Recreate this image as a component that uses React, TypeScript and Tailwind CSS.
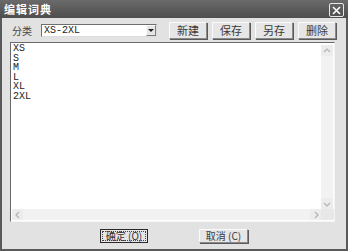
import React from 'react'

const cjk = { fontFamily: '"Noto Sans CJK SC", "Liberation Sans", sans-serif' }

const sizes = ['XS', 'S', 'M', 'L', 'XL', '2XL']

const Btn: React.FC<{ label: string; className?: string }> = ({ label, className = '' }) => (
	<button
		className={`shrink-0 whitespace-nowrap flex items-center justify-center bg-[#e6e6e6] border border-t-[#fafafa] border-l-[#fafafa] border-r-[#8a8a8a] border-b-[#8a8a8a] shadow-[1px_1px_0_#5a5a5a] text-[11px] leading-none text-[#3a3a3a] ${className}`}
		style={cjk}
	>
		{label}
	</button>
)

const Chevron: React.FC<{ dir: 'up' | 'down' | 'left' | 'right' }> = ({ dir }) => {
	const d = {
		up: 'M2 6 L5 3 L8 6',
		down: 'M2 4 L5 7 L8 4',
		left: 'M6 2 L3 5 L6 8',
		right: 'M4 2 L7 5 L4 8',
	}[dir]
	return (
		<svg width="10" height="10" viewBox="0 0 10 10">
			<path d={d} fill="none" stroke="#b4b4b4" strokeWidth="1.2" />
		</svg>
	)
}

export default function App() {
	return (
		<div className="w-[348px] h-[251px] bg-[#5a5a5a] flex flex-col overflow-hidden">
			{/* 标题栏 */}
			<div className="h-[18px] flex items-center justify-between pl-[4px] pr-[4px] bg-gradient-to-b from-[#6a6a6a] to-[#4e4e4e]">
				<span className="text-[11px] font-bold text-white leading-none tracking-[1px]" style={cjk}>
					编辑词典
				</span>
				<div className="w-[15px] h-[14px] border border-[#e8e8e8] rounded-[2px] flex items-center justify-center mt-[2px]">
					<svg width="9" height="9" viewBox="0 0 9 9">
						<path d="M1 1 L8 8 M8 1 L1 8" stroke="#ffffff" strokeWidth="1.6" />
					</svg>
				</div>
			</div>

			{/* 主体 */}
			<div className="flex-1 mx-[2px] mb-[2px] bg-[#e2e2e2] pl-[8px] pr-[11px] pt-[4px] pb-[6px] flex flex-col">
				<div className="h-[17px] flex items-center">
					<span className="shrink-0 whitespace-nowrap w-[19px] ml-[2px] text-[10px] leading-none text-[#444]" style={cjk}>
						分类
					</span>
					<div className="shrink-0 ml-[10px] w-[116px] h-[13px] bg-white border border-t-[#6e6e6e] border-l-[#6e6e6e] border-r-[#dcdcdc] border-b-[#dcdcdc] flex items-center justify-between">
						<span className="pl-[2px] text-[10px] leading-none text-[#222]" style={{ fontFamily: '"Liberation Mono", monospace' }}>
							XS-2XL
						</span>
						<div className="w-[10px] h-[11px] bg-[#e6e6e6] border border-t-[#fafafa] border-l-[#fafafa] border-r-[#7a7a7a] border-b-[#7a7a7a] flex items-center justify-center">
							<svg width="6" height="4" viewBox="0 0 6 4">
								<path d="M0 0 L6 0 L3 3 Z" fill="#222" />
							</svg>
						</div>
					</div>
					<div className="shrink-0 ml-[12px] flex gap-[5px]">
						<Btn label="新建" className="w-[38px] h-[17px]" />
						<Btn label="保存" className="w-[38px] h-[17px]" />
						<Btn label="另存" className="w-[38px] h-[17px]" />
						<Btn label="删除" className="w-[38px] h-[17px]" />
					</div>
				</div>

				{/* 词条编辑区 */}
				<div className="mt-[3px] h-[180px] border border-t-[#6a6a6a] border-l-[#6a6a6a] border-r-[#f4f4f4] border-b-[#f4f4f4] bg-white flex flex-col">
					<div className="flex-1 flex min-h-0">
						<div
							className="flex-1 pl-[2px] pt-[1px] text-[10px] leading-[9.6px] text-[#222]"
							style={{ fontFamily: '"Liberation Mono", monospace' }}
						>
							{sizes.map(s => (
								<div key={s}>{s}</div>
							))}
						</div>
						<div className="w-[12px] mr-[1px] mt-[2px] bg-[#f2f2f2] flex flex-col justify-between">
							<div className="h-[11px] bg-[#ececec] flex items-center justify-center">
								<Chevron dir="up" />
							</div>
							<div className="h-[11px] bg-[#ececec] flex items-center justify-center">
								<Chevron dir="down" />
							</div>
						</div>
					</div>
					<div className="h-[11px] flex mb-[1px]">
						<div className="flex-1 ml-[1px] bg-[#f2f2f2] flex justify-between">
							<div className="w-[11px] bg-[#ececec] flex items-center justify-center">
								<Chevron dir="left" />
							</div>
							<div className="w-[11px] bg-[#ececec] flex items-center justify-center">
								<Chevron dir="right" />
							</div>
						</div>
						<div className="w-[13px] bg-[#e8e8e8]" />
					</div>
				</div>

				{/* 底部按钮 */}
				<div className="mt-[7px] flex">
					<button
						className="shrink-0 ml-[90px] w-[48px] h-[14px] bg-[#e6e6e6] border border-[#2a2a2a] flex items-center justify-center p-[1px]"
						style={cjk}
					>
						<span className="w-full h-full border border-dotted border-[#444] flex items-center justify-center text-[10px] leading-none text-[#333] whitespace-nowrap">
							确定 (O)
						</span>
					</button>
					<Btn label="取消 (C)" className="ml-[51px] w-[49px] h-[14px] !text-[10px]" />
				</div>
			</div>
		</div>
	)
}
